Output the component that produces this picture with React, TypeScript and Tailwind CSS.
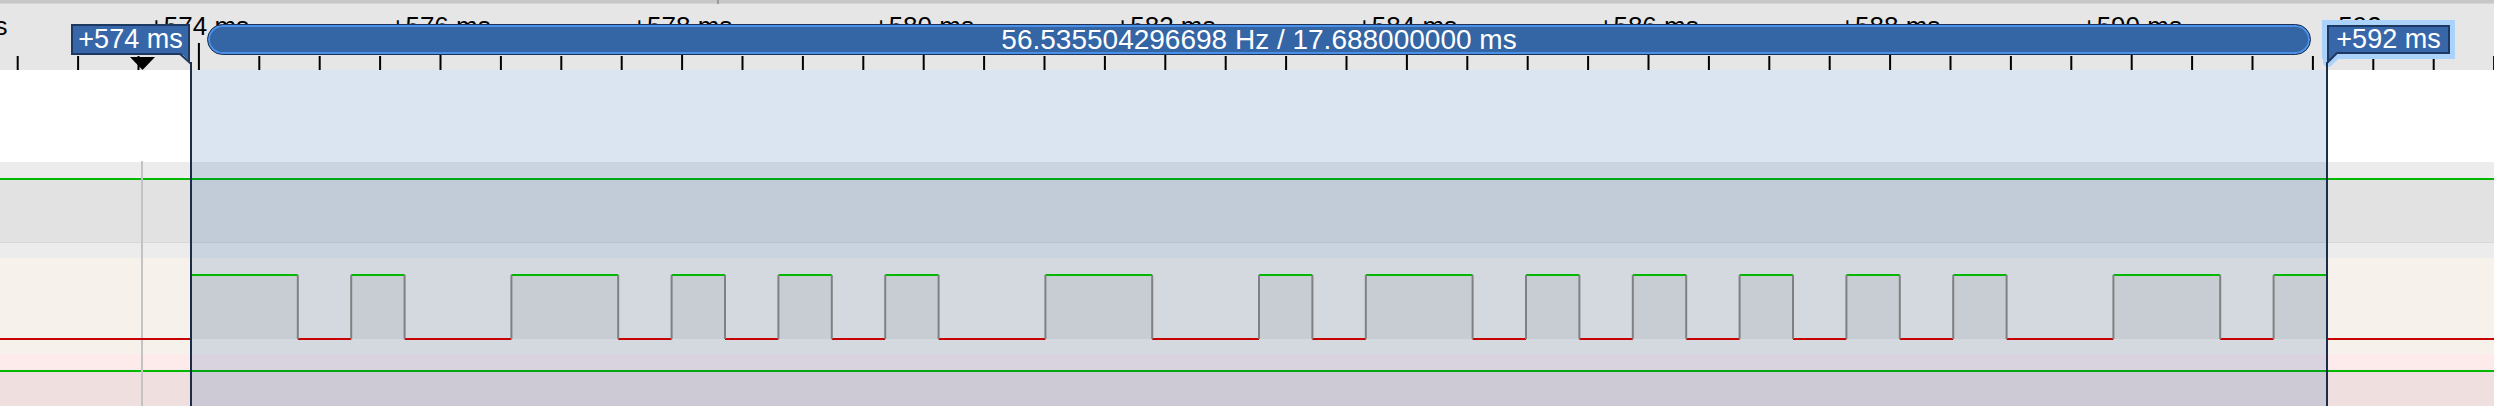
import React from "react";

// Timing ruler: 0.5 ms per minor tick, 120.8 px per ms
const TICK0 = 17.7;
const TICK_STEP = 60.4;
const MS0 = 574; // label of major tick k = 3

// Selection (cursor pair) and the decoded pulse train, in 40 equal bit units
const SEL_X = 191;
const SEL_W = 2136;
const UNIT = SEL_W / 40;
const EDGES = [
    0, 2, 3, 4, 6, 8, 9, 10, 11, 12, 13, 14, 16, 18, 20, 21, 22, 24, 25, 26, 27,
    28, 29, 30, 31, 32, 33, 34, 36, 38, 39, 40,
];

const HIGH_Y = 275;
const LOW_Y = 339;

const ux = (u: number) => SEL_X + u * UNIT;

function Ruler() {
    const ticks = Array.from({ length: 44 }, (_, i) => i - 1);
    const labels = ticks.filter((k) => (((k - 3) % 4) + 4) % 4 === 0);

    return (
        <div className="relative h-[70px] bg-[#e6e6e6]">
            <div className="h-[4px] border-b border-[#d6d6d6] bg-[#c7c7c7]" />
            <div className="absolute left-[717px] top-0 h-[4px] w-[2px] bg-[#9c9c9c]" />

            {labels.map((k) => (
                <span
                    key={k}
                    className="absolute top-[13px] -translate-x-1/2 whitespace-nowrap font-['Liberation_Sans','Arial',sans-serif] text-[26px] leading-[26px] text-black"
                    style={{ left: TICK0 + k * TICK_STEP }}
                >
                    +{MS0 + ((k - 3) / 4) * 2} ms
                </span>
            ))}

            <svg className="absolute left-0 top-0" width={2494} height={70}>
                {ticks.map((k) => {
                    const x = TICK0 + k * TICK_STEP;
                    const major = (((k - 3) % 4) + 4) % 4 === 0;
                    return (
                        <line
                            key={k}
                            x1={x}
                            x2={x}
                            y1={major ? 43 : 56}
                            y2={70}
                            stroke="#000"
                            strokeWidth={2}
                        />
                    );
                })}
                {/* trigger marker */}
                <polygon points="130,57 155,57 142.5,70" fill="#000" />
            </svg>

            {/* period / frequency measurement bar */}
            <div className="absolute left-[207px] top-[24px] flex h-[31px] w-[2104px] items-center justify-center rounded-full border border-[#1d3255] bg-[#3465a4] shadow-[inset_0_0_0_2px_#4b90e8]">
                <span className="whitespace-nowrap font-['Liberation_Sans','Arial',sans-serif] text-[28px] leading-none text-white">
                    56.535504296698 Hz / 17.688000000 ms
                </span>
            </div>

            {/* left cursor tooltip */}
            <div className="absolute left-[71px] top-[24px] flex h-[31px] w-[119px] items-center justify-center border-2 border-[#1e3961] bg-[#3767a8]">
                <span className="whitespace-nowrap font-['Liberation_Sans','Arial',sans-serif] text-[27px] leading-none text-white">
                    +574 ms
                </span>
            </div>
            <svg className="absolute left-0 top-0" width={2494} height={70}>
                <polygon points="180,52 189,52 189,61" fill="#3767a8" />
                <path
                    d="M180 54 L189 62 L189 52"
                    fill="none"
                    stroke="#1e3961"
                    strokeWidth={2}
                />
            </svg>

            {/* right cursor tooltip (hovered) */}
            <svg className="absolute left-0 top-0" width={2494} height={70}>
                <path
                    d="M2328 50 L2328 62 L2340 50"
                    fill="#abd2fa"
                    stroke="#abd2fa"
                    strokeWidth={10}
                    strokeLinejoin="round"
                />
            </svg>
            <div className="absolute left-[2327px] top-[25px] flex h-[29px] w-[123px] items-center justify-center border-2 border-[#1e3961] bg-[#3767a8] shadow-[0_0_0_5px_#abd2fa]">
                <span className="whitespace-nowrap font-['Liberation_Sans','Arial',sans-serif] text-[27px] leading-none text-white">
                    +592 ms
                </span>
            </div>
            <svg className="absolute left-0 top-0" width={2494} height={70}>
                <polygon points="2329,51 2329,61 2338,51" fill="#3767a8" />
                <path
                    d="M2328 52 L2328 62 L2337 53"
                    fill="none"
                    stroke="#1e3961"
                    strokeWidth={2}
                />
            </svg>
        </div>
    );
}

function Waveform() {
    const pairs: [number, number][] = [];
    for (let i = 0; i < EDGES.length; i += 2) pairs.push([EDGES[i], EDGES[i + 1]]);

    const lows: [number, number][] = [[0, ux(0)]];
    pairs.forEach(([, f], i) => {
        const next = pairs[i + 1];
        lows.push([ux(f), next ? ux(next[0]) : 2494]);
    });

    return (
        <svg className="pointer-events-none absolute left-0 top-0" width={2494} height={406}>
            {pairs.map(([r, f]) => (
                <rect
                    key={`f${r}`}
                    x={ux(r)}
                    y={HIGH_Y}
                    width={ux(f) - ux(r)}
                    height={LOW_Y - HIGH_Y}
                    fill="rgba(0,0,0,0.055)"
                />
            ))}
            {lows.map(([a, b]) => (
                <line key={`l${a}`} x1={a} x2={b} y1={LOW_Y} y2={LOW_Y} stroke="#c80000" strokeWidth={2} />
            ))}
            {pairs.map(([r, f]) => (
                <line
                    key={`h${r}`}
                    x1={ux(r)}
                    x2={ux(f)}
                    y1={HIGH_Y}
                    y2={HIGH_Y}
                    stroke="#00b800"
                    strokeWidth={2}
                />
            ))}
            {EDGES.map((u) => (
                <line
                    key={`e${u}`}
                    x1={ux(u)}
                    x2={ux(u)}
                    y1={HIGH_Y}
                    y2={LOW_Y}
                    stroke="#808080"
                    strokeWidth={2}
                />
            ))}
        </svg>
    );
}

export default function App() {
    return (
        <div className="relative h-[406px] w-[2494px] overflow-hidden bg-white">
            <Ruler />

            {/* channel rows */}
            <div className="flex flex-col">
                <div className="h-[92px] bg-white" />
                <div className="h-[16px] bg-[#ececec]" />
                <div className="h-[2px] bg-[#00b800]" />
                <div className="h-[62px] bg-[#e2e2e2]" />
                <div className="h-[1px] bg-[#d8d8d8]" />
                <div className="h-[15px] bg-[#ececec]" />
                <div className="h-[96px] bg-[#f6f1eb]" />
                <div className="h-[16px] bg-[#fcebea]" />
                <div className="h-[2px] bg-[#00b800]" />
                <div className="h-[34px] bg-[#efdfdf]" />
            </div>

            {/* trigger marker line */}
            <div className="absolute left-[141px] top-[161px] bottom-0 w-[2px] bg-[#c3c3c3]" />

            {/* selected range */}
            <div className="absolute left-[191px] top-[70px] bottom-0 w-[2136px] bg-[rgba(0,74,153,0.14)]" />

            <Waveform />

            {/* cursor lines */}
            <div className="absolute left-[190px] top-[62px] bottom-0 w-[2px] bg-[#1c2d49]" />
            <div className="absolute left-[2326px] top-[62px] bottom-0 w-[2px] bg-[#1c2d49]" />
        </div>
    );
}
